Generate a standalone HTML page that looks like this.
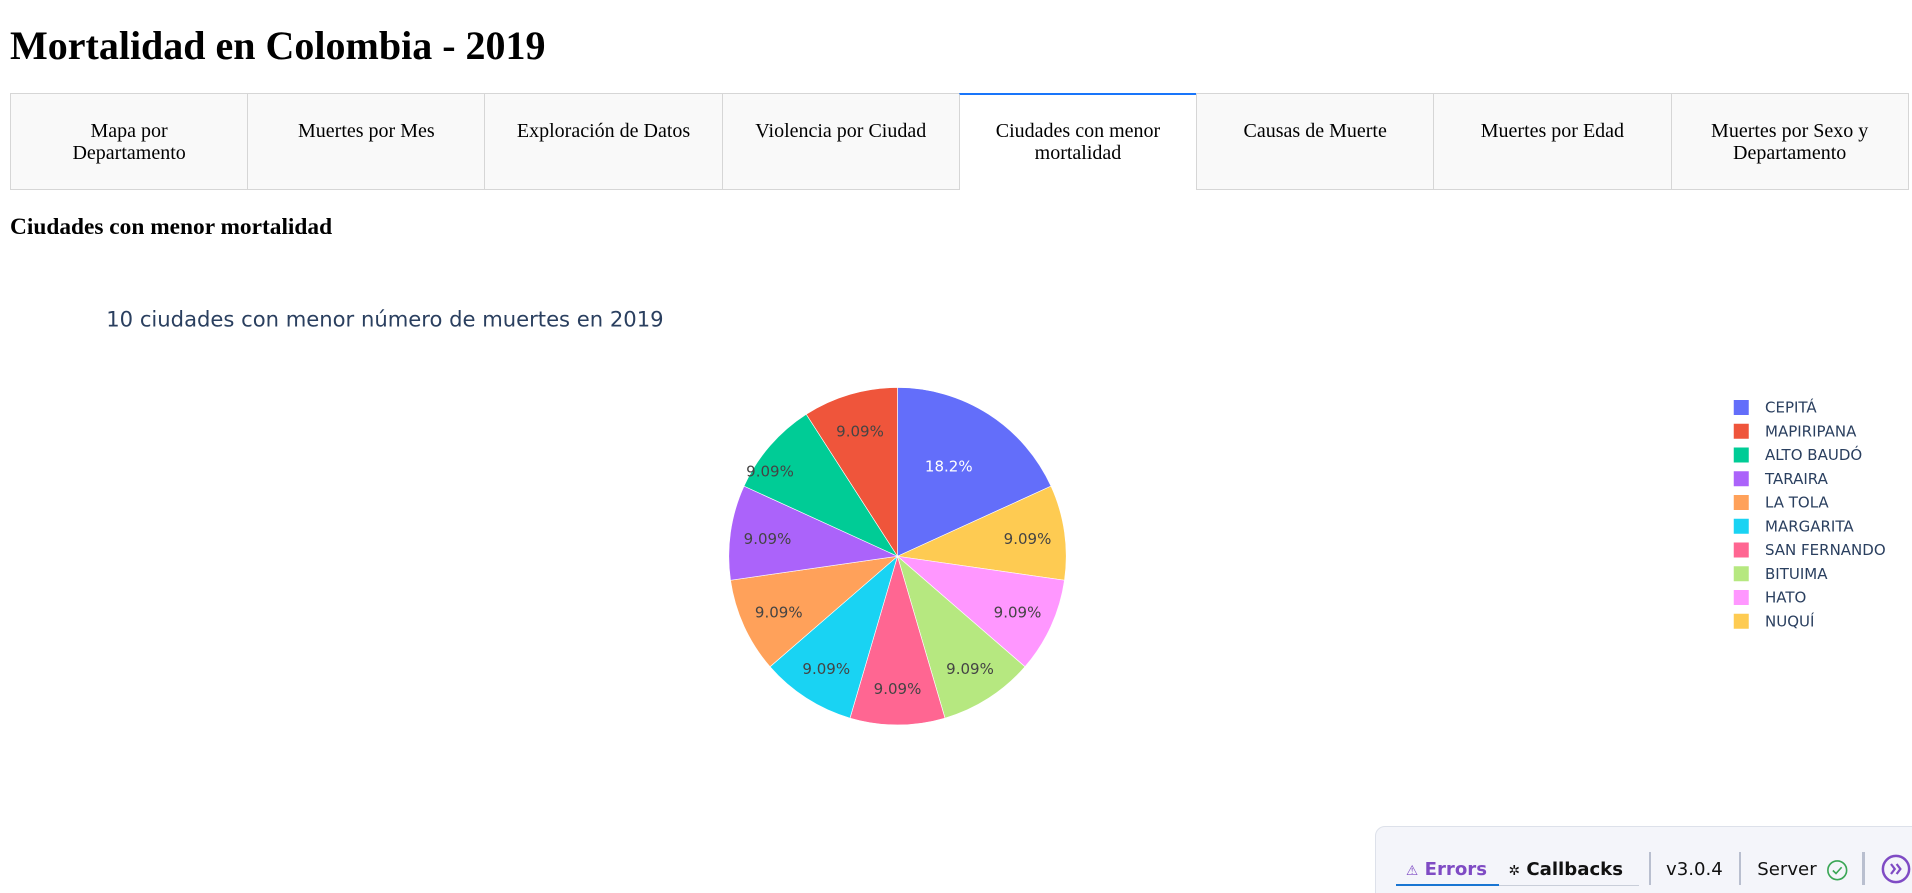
<!DOCTYPE html>
<html><head><meta charset="utf-8">
<style>
html,body{margin:0;padding:0;background:#fff;overflow:hidden}
#z{zoom:1.25;width:1530px;height:714px;position:relative;font-family:"Liberation Serif",serif}
h1{margin:0;position:absolute;left:8px;top:18px;font-size:32px;font-weight:bold;line-height:37px}
.tabs{position:absolute;left:8px;top:74px;width:1519px;height:78px;display:flex}
.tab{flex:1;box-sizing:border-box;background:#f9f9f9;border:1px solid #d6d6d6;border-right:none;text-align:center;font-size:16px;line-height:18px;padding-top:21px}
.tab:last-child{border-right:1px solid #d6d6d6}
.tab.sel{background:#fff;border-top:2px solid #1975fa;border-bottom:none;padding-top:20px}
h3{position:absolute;left:8px;top:171px;margin:0;font-size:18.7px;line-height:22px}
svg text{font-family:"DejaVu Sans",Verdana,sans-serif}
.dev{position:absolute;left:1100px;top:661px;width:440px;height:60px;background:#f4f5fa;border:1px solid #dde1ea;border-radius:8px 0 0 0;font-family:"DejaVu Sans",sans-serif;font-size:14.5px}
.dev span{position:absolute;top:25px;white-space:nowrap}
.dv{position:absolute;top:20px;width:2px;height:26px;background:#b9bfcf}
</style></head><body><div id="z">
<h1>Mortalidad en Colombia - 2019</h1>
<div class="tabs">
<div class="tab">Mapa por<br>Departamento</div>
<div class="tab">Muertes por Mes</div>
<div class="tab">Exploración de Datos</div>
<div class="tab">Violencia por Ciudad</div>
<div class="tab sel">Ciudades con menor<br>mortalidad</div>
<div class="tab">Causas de Muerte</div>
<div class="tab">Muertes por Edad</div>
<div class="tab">Muertes por Sexo y<br>Departamento</div>
</div>
<h3>Ciudades con menor mortalidad</h3>
<svg style="position:absolute;left:0;top:0" width="1530" height="714">
<text x="85" y="261" font-size="16.9" fill="#2a3f5f">10 ciudades con menor número de muertes en 2019</text>
<g transform="translate(718,445)" stroke="#fff" stroke-width="0.5">
<path d="M0,0L0,-135A135,135 0 0 1 122.8,-56.1Z" fill="#636efa"/>
<path d="M0,0L122.8,-56.1A135,135 0 0 1 133.6,19.2Z" fill="#FECB52"/>
<path d="M0,0L133.6,19.2A135,135 0 0 1 102,88.4Z" fill="#FF97FF"/>
<path d="M0,0L102,88.4A135,135 0 0 1 38,129.5Z" fill="#B6E880"/>
<path d="M0,0L38,129.5A135,135 0 0 1 -38,129.5Z" fill="#FF6692"/>
<path d="M0,0L-38,129.5A135,135 0 0 1 -102,88.4Z" fill="#19d3f3"/>
<path d="M0,0L-102,88.4A135,135 0 0 1 -133.6,19.2Z" fill="#FFA15A"/>
<path d="M0,0L-133.6,19.2A135,135 0 0 1 -122.8,-56.1Z" fill="#ab63fa"/>
<path d="M0,0L-122.8,-56.1A135,135 0 0 1 -73,-113.6Z" fill="#00cc96"/>
<path d="M0,0L-73,-113.6A135,135 0 0 1 0,-135Z" fill="#EF553B"/>
<g stroke="none" font-size="12" fill="#444" text-anchor="middle">
<text x="41" y="-68" fill="#fff">18.2%</text>
<text x="104" y="-10">9.09%</text>
<text x="96" y="49">9.09%</text>
<text x="58" y="94">9.09%</text>
<text x="0" y="110">9.09%</text>
<text x="-57" y="94">9.09%</text>
<text x="-95" y="49">9.09%</text>
<text x="-104" y="-10">9.09%</text>
<text x="-102" y="-64">9.09%</text>
<text x="-30" y="-96">9.09%</text>
</g></g>
<g font-size="12" fill="#2a3f5f">
<rect x="1387" y="320" width="12" height="12" fill="#636efa"/><text x="1412" y="330">CEPITÁ</text>
<rect x="1387" y="339" width="12" height="12" fill="#EF553B"/><text x="1412" y="349">MAPIRIPANA</text>
<rect x="1387" y="358" width="12" height="12" fill="#00cc96"/><text x="1412" y="368">ALTO BAUDÓ</text>
<rect x="1387" y="377" width="12" height="12" fill="#ab63fa"/><text x="1412" y="387">TARAIRA</text>
<rect x="1387" y="396" width="12" height="12" fill="#FFA15A"/><text x="1412" y="406">LA TOLA</text>
<rect x="1387" y="415" width="12" height="12" fill="#19d3f3"/><text x="1412" y="425">MARGARITA</text>
<rect x="1387" y="434" width="12" height="12" fill="#FF6692"/><text x="1412" y="444">SAN FERNANDO</text>
<rect x="1387" y="453" width="12" height="12" fill="#B6E880"/><text x="1412" y="463">BITUIMA</text>
<rect x="1387" y="472" width="12" height="12" fill="#FF97FF"/><text x="1412" y="482">HATO</text>
<rect x="1387" y="491" width="12" height="12" fill="#FECB52"/><text x="1412" y="501">NUQUÍ</text>
</g>
</svg>
<div class="dev">
<span style="left:24px;color:#7f4bc4;font-weight:bold"><span style="position:static;font-size:11px">⚠</span> Errors</span>
<span style="left:106px;font-weight:bold;color:#111"><span style="position:static;font-size:11px">✲</span> Callbacks</span>
<div style="position:absolute;left:16px;top:45px;width:82px;height:2px;background:#1975d2"></div>
<div style="position:absolute;left:98px;top:46px;width:112px;height:1px;background:#c9ced9"></div>
<div class="dv" style="left:218px"></div>
<span style="left:232px;color:#111">v3.0.4</span>
<div class="dv" style="left:290px"></div>
<span style="left:305px;color:#111">Server</span>
<svg style="position:absolute;left:360px;top:25px" width="18" height="18"><circle cx="9" cy="9" r="7.5" fill="none" stroke="#3aa655" stroke-width="1.3"/><path d="M5.5,9.2L8,11.6L12.5,6.6" fill="none" stroke="#3aa655" stroke-width="1.3"/></svg>
<div class="dv" style="left:389px"></div>
<svg style="position:absolute;left:404px;top:21px" width="24" height="24"><circle cx="12" cy="12" r="10.5" fill="none" stroke="#7f4bc4" stroke-width="2"/><path d="M8,8L11,12L8,16M12.5,8L15.5,12L12.5,16" fill="none" stroke="#7f4bc4" stroke-width="1.8"/></svg>
</div>
</div></body></html>
